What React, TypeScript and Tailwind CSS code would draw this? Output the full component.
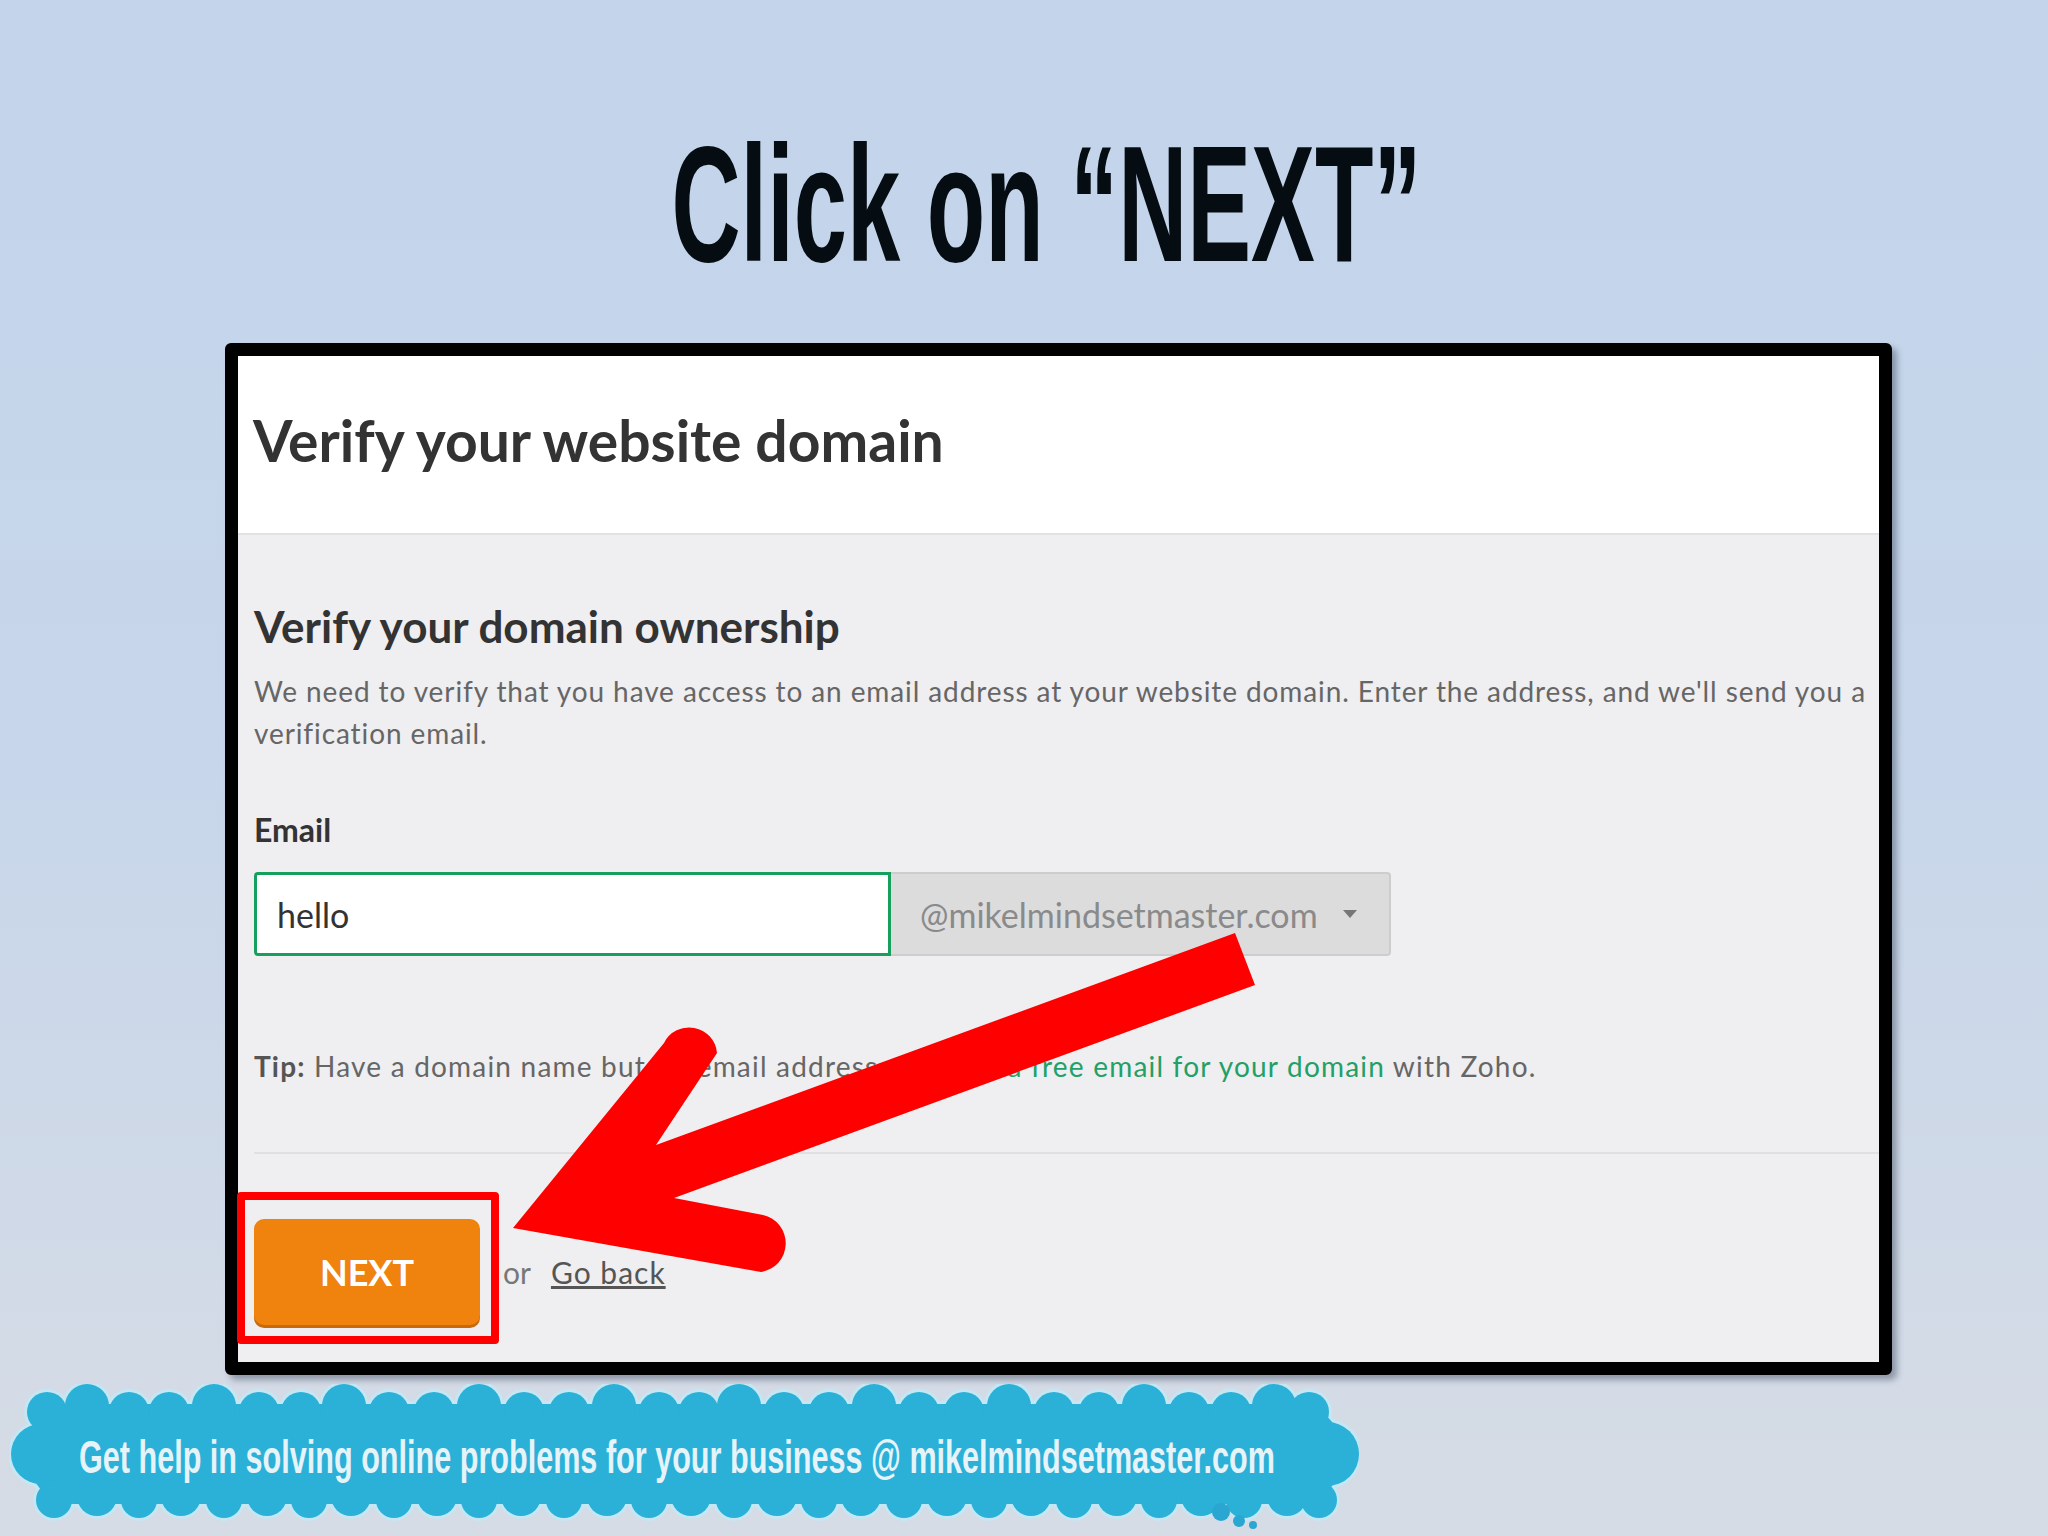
import React from 'react'

const lato = { fontFamily: 'Lato, "Open Sans", sans-serif' }
const narrow = { fontFamily: '"Liberation Sans Narrow", "Liberation Sans", sans-serif' }

function Cloud() {
  // bumps along the top and bottom edges of the banner
  const top = [38, 78, 120, 160, 205, 250, 292, 335, 380, 425, 470, 515, 560, 605, 650, 690, 730, 775, 820, 865, 910, 955, 1000, 1045, 1090, 1135, 1180, 1222, 1265, 1300]
  const bottom = [45, 88, 130, 172, 215, 258, 300, 342, 385, 428, 470, 512, 555, 598, 640, 682, 725, 768, 810, 852, 895, 938, 980, 1022, 1065, 1108, 1150, 1192, 1235, 1278, 1310]
  const shapes = (
    <>
      <rect x="20" y="20" width="1312" height="100" rx="45" />
      <circle cx="32" cy="70" r="30" />
      <circle cx="1318" cy="70" r="32" />
      {top.map((x, i) => (
        <circle key={'t' + i} cx={x} cy={i % 3 === 1 ? 22 : 28} r={i % 3 === 1 ? 22 : 20} />
      ))}
      {bottom.map((x, i) => (
        <circle key={'b' + i} cx={x} cy={i % 2 ? 112 : 116} r={i % 2 ? 20 : 18} />
      ))}
    </>
  )
  return (
    <svg className="absolute inset-0" width="1350" height="145" viewBox="0 0 1350 145">
      <g fill="#c4e7f3" stroke="#c4e7f3" strokeWidth="6">{shapes}</g>
      <g fill="#2bb0d8">{shapes}</g>
      <circle cx="1212" cy="128" r="9" fill="#2aa6d2" />
      <circle cx="1230" cy="137" r="6" fill="#2aa6d2" />
      <circle cx="1244" cy="141" r="4" fill="#2aa6d2" />
    </svg>
  )
}

export default function App() {
  return (
    <div className="relative w-[2048px] h-[1536px] overflow-hidden bg-gradient-to-b from-[#c3d4eb] via-[#c7d6ea] to-[#d6dce5]">
      {/* slide title */}
      <div className="pt-[122px] pl-[45px] flex justify-center">
        <h1 className="text-[165px] leading-none font-bold text-[#050c12] scale-x-[0.58] whitespace-nowrap" style={narrow}>
          Click on “NEXT”
        </h1>
      </div>

      {/* screenshot card */}
      <div
        className="mt-[56px] ml-[225px] w-[1667px] border-[13px] border-black rounded-[6px] shadow-[5px_5px_6px_rgba(60,70,90,0.45)] bg-[#efeef0]"
        style={lato}
      >
        <div className="h-[179px] bg-white border-b-2 border-[#e2e2e2] pl-[15px] pt-[50px]">
          <h2 className="text-[57px] font-bold text-[#333] leading-[1.2]">Verify your website domain</h2>
        </div>

        <div className="px-[16px] pt-[65px] pb-[37px]">
          <h3 className="text-[44px] font-bold text-[#333] leading-[1.2]">Verify your domain ownership</h3>
          <p className="mt-[17px] -mr-[16px] whitespace-nowrap text-[28px] leading-[42px] tracking-[0.9px] text-[#666]">
            We need to verify that you have access to an email address at your website domain. Enter the address, and we'll send you a
            <br />
            verification email.
          </p>

          <div className="mt-[57px] text-[32px] font-bold text-[#333] leading-[1.2]">Email</div>
          <div className="mt-[23px] flex h-[84px]">
            <div className="w-[637px] bg-white border-[3px] border-[#17a05d] rounded-l-[4px] flex items-center pl-[20px] text-[34px] text-[#333]">
              hello
            </div>
            <div className="w-[500px] bg-[#dcdcdd] border-2 border-l-0 border-[#cdcdce] rounded-r-[4px] flex items-center pl-[29px] text-[34px] text-[#8a8a8a]">
              <span>@mikelmindsetmaster.com</span>
              <svg className="ml-auto mr-[32px]" width="14" height="8" viewBox="0 0 14 8">
                <path d="M0 0h14L7 8z" fill="#777" />
              </svg>
            </div>
          </div>

          <p className="mt-[94px] whitespace-nowrap text-[28px] leading-[1.2] tracking-[1.2px] text-[#666]">
            <b className="text-[#555]">Tip:</b> Have a domain name but no email address yet?{' '}
            <a className="text-[#21a067]">Get a free email for your domain</a> with Zoho.
          </p>

          <div className="mt-[68px] -mr-[16px] border-t-2 border-[#e0e0e0]" />

          <div className="mt-[65px] flex items-center">
            <div className="relative">
              <button className="w-[226px] h-[106px] rounded-[10px] bg-[#f0820e] shadow-[0_3px_0_#c9690a] text-white text-[36px] font-bold">
                NEXT
              </button>
              <span className="absolute -left-[17px] -top-[27px] w-[262px] h-[152px] border-[8px] border-[#ff0000] rounded-[4px]" />
            </div>
            <span className="ml-[23px] text-[30px] text-[#777] leading-[1.2]">or</span>
            <a className="ml-[20px] text-[30px] tracking-[1px] text-[#555] underline leading-[1.2]">Go back</a>
          </div>
        </div>
      </div>

      {/* bottom banner */}
      <div className="relative mt-[9px] ml-[9px] w-[1350px] h-[145px]">
        <Cloud />
        <div className="relative pt-[50px] pl-[70px]">
          <span
            className="inline-block origin-left scale-x-[0.665] text-[46px] leading-none font-bold text-[#e6f3f9] whitespace-nowrap"
            style={narrow}
          >
            Get help in solving online problems for your business @ mikelmindsetmaster.com
          </span>
        </div>
      </div>

      {/* red annotation arrow */}
      <svg className="absolute inset-0 pointer-events-none" width="2048" height="1536" viewBox="0 0 2048 1536">
        <path
          d="M513 1228 L664 1043 A28 28 0 0 1 717 1053 L656 1145 L1235 933 L1255 985 L674 1198 L763 1215 A29 29 0 0 1 761 1272 Z"
          fill="#ff0000"
        />
      </svg>
    </div>
  )
}
